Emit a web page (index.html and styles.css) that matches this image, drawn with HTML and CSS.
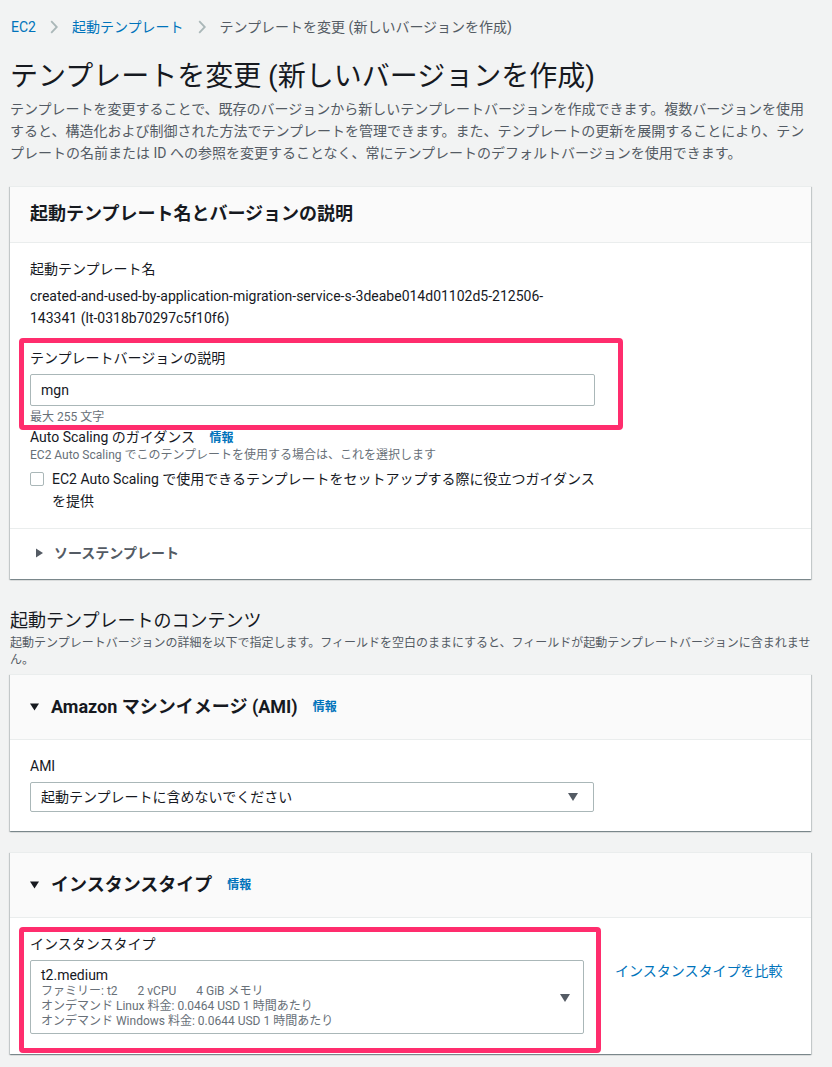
FILE: index.html
```html
<!DOCTYPE html>
<html lang="ja">
<head>
  <meta charset="UTF-8" />
  <meta name="viewport" content="width=device-width, initial-scale=1.0" />
  <title>テンプレートを変更 (新しいバージョンを作成)</title>
  <link rel="stylesheet" href="styles.css">
</head>
<body>
  <div class="page">
    <!-- Breadcrumb -->
    <nav class="crumbs">
      <a href="#">EC2</a>
      <svg class="sep" width="8" height="14" viewBox="0 0 8 14"><path d="M1.2 1.2l5.6 5.8-5.6 5.8" fill="none" stroke="#aab7b8" stroke-width="1.8"/></svg>
      <a href="#">起動テンプレート</a>
      <svg class="sep" width="8" height="14" viewBox="0 0 8 14"><path d="M1.2 1.2l5.6 5.8-5.6 5.8" fill="none" stroke="#aab7b8" stroke-width="1.8"/></svg>
      <span class="current">テンプレートを変更 (新しいバージョンを作成)</span>
    </nav>

    <h1 class="page-title">テンプレートを変更 (新しいバージョンを作成)</h1>
    <p class="page-desc">テンプレートを変更することで、既存のバージョンから新しいテンプレートバージョンを作成できます。複数バージョンを使用<br>すると、構造化および制御された方法でテンプレートを管理できます。また、テンプレートの更新を展開することにより、テン<br>プレートの名前または ID への参照を変更することなく、常にテンプレートのデフォルトバージョンを使用できます。</p>

    <!-- Name and version -->
    <section class="panel panel-first">
      <div class="panel-head"><h2>起動テンプレート名とバージョンの説明</h2></div>
      <div class="panel-body">
        <div class="field">
          <div class="label">起動テンプレート名</div>
          <div class="value">created-and-used-by-application-migration-service-s-3deabe014d01102d5-212506-<br>143341 (lt-0318b70297c5f10f6)</div>
        </div>
        <div class="field field-desc marked">
          <div class="label">テンプレートバージョンの説明</div>
          <div class="input">mgn</div>
          <div class="hint">最大 255 文字</div>
        </div>
        <div class="field field-guide">
          <div class="label">Auto Scaling のガイダンス <a class="info" href="#">情報</a></div>
          <div class="note">EC2 Auto Scaling でこのテンプレートを使用する場合は、これを選択します</div>
          <label class="check">
            <span class="box"></span>
            <span>EC2 Auto Scaling で使用できるテンプレートをセットアップする際に役立つガイダンス<br>を提供</span>
          </label>
        </div>
      </div>
      <div class="panel-foot">
        <svg width="16" height="16" viewBox="0 0 16 16"><polygon points="6,3.5 13,8 6,12.5" fill="#545b64"/></svg>
        ソーステンプレート
      </div>
    </section>

    <!-- Contents -->
    <h2 class="section-title">起動テンプレートのコンテンツ</h2>
    <p class="section-desc">起動テンプレートバージョンの詳細を以下で指定します。フィールドを空白のままにすると、フィールドが起動テンプレートバージョンに含まれませ<br>ん。</p>

    <section class="panel">
      <div class="panel-head tall">
        <h2>
          <svg width="12" height="12" viewBox="0 0 12 12"><polygon points="0,2.5 9,2.5 4.5,9.5" fill="#16191f"/></svg>
          Amazon マシンイメージ (AMI)
          <a class="info" href="#">情報</a>
        </h2>
      </div>
      <div class="panel-body body-ami">
        <div class="field">
          <div class="label">AMI</div>
          <div class="select">
            <span>起動テンプレートに含めないでください</span>
            <svg width="10" height="8" viewBox="0 0 10 8"><polygon points="0,0 10,0 5,8" fill="#545b64"/></svg>
          </div>
        </div>
      </div>
    </section>

    <section class="panel panel-type">
      <div class="panel-head tall">
        <h2>
          <svg width="12" height="12" viewBox="0 0 12 12"><polygon points="0,2.5 9,2.5 4.5,9.5" fill="#16191f"/></svg>
          インスタンスタイプ
          <a class="info" href="#">情報</a>
        </h2>
      </div>
      <div class="panel-body body-type">
        <div class="type-row">
          <div class="field field-type marked">
            <div class="label">インスタンスタイプ</div>
            <div class="select select-tall">
              <div class="opt">
                <div class="opt-name">t2.medium</div>
                <div class="opt-meta">ファミリー: t2<span class="gap"></span>2 vCPU<span class="gap"></span>4 GiB メモリ</div>
                <div class="opt-meta">オンデマンド Linux 料金: 0.0464 USD 1 時間あたり</div>
                <div class="opt-meta">オンデマンド Windows 料金: 0.0644 USD 1 時間あたり</div>
              </div>
              <svg width="10" height="8" viewBox="0 0 10 8"><polygon points="0,0 10,0 5,8" fill="#545b64"/></svg>
            </div>
          </div>
          <a class="compare" href="#">インスタンスタイプを比較</a>
        </div>
      </div>
    </section>
  </div>
</body>
</html>
```

FILE: styles.css
```css
/* Global */
* {
  box-sizing: border-box;
}
body {
  margin: 0;
  background: #f2f3f3;
  color: #16191f;
  font-family: Roboto, "Noto Sans CJK JP", sans-serif;
  font-size: 14px;
  line-height: 20px;
}
a {
  color: #0073bb;
  text-decoration: none;
}
.page {
  padding: 17px 21px 40px 10px;
}

/* Breadcrumb */
.crumbs {
  display: flex;
  align-items: center;
  height: 20px;
  padding-left: 1px;
}
.crumbs .sep {
  margin: 0 14px 0 14px;
}
.crumbs .current {
  color: #545b64;
}

/* Page header */
.page-title {
  margin: 22px 0 3px;
  font-size: 28px;
  line-height: 36px;
  font-weight: 400;
}
.page-desc {
  margin: 0 -21px 0 0;
  color: #545b64;
  line-height: 22px;
}

/* Panels */
.panel {
  background: #fff;
  border-top: 1px solid #eaeded;
  box-shadow: 0 1px 1px 0 rgba(0,28,36,0.3), 1px 1px 1px 0 rgba(0,28,36,0.15), -1px 1px 1px 0 rgba(0,28,36,0.15);
}
.panel-first {
  margin-top: 22px;
}
.panel-head {
  background: #fafafa;
  border-bottom: 1px solid #eaeded;
  padding: 15px 20px 16px;
}
.panel-head.tall {
  padding: 20px 20px 20px;
}
.panel-head h2 {
  display: flex;
  align-items: center;
  margin: 0;
  font-size: 18px;
  line-height: 24px;
  font-weight: 700;
}
.panel-head h2 svg {
  margin-right: 9px;
}
.panel-head .info {
  margin-left: 15px;
  font-size: 12px;
  font-weight: 700;
}
.panel-body {
  padding: 16px 20px 16px;
}
.panel-foot {
  display: flex;
  align-items: center;
  border-top: 1px solid #eaeded;
  padding: 14px 20px 16px;
  font-weight: 700;
  color: #545b64;
}
.panel-foot svg {
  margin-right: 8px;
}

/* Form fields */
.field {
  width: 565px;
}
.label {
  line-height: 20px;
}
.value {
  margin-top: 6px;
  line-height: 22px;
}
.field-desc {
  margin-top: 19px;
}
.input {
  margin-top: 6px;
  height: 32px;
  padding: 0 10px;
  border: 1px solid #aab7b8;
  border-radius: 2px;
  display: flex;
  align-items: center;
}
.hint {
  margin-top: 3px;
  font-size: 12px;
  line-height: 16px;
  color: #687078;
}
.field-guide {
  margin-top: 3px;
}
.field-guide .label {
  line-height: 18px;
}
.field-guide .info {
  margin-left: 11px;
  font-size: 12px;
  font-weight: 700;
}
.note {
  font-size: 12px;
  line-height: 16px;
  color: #687078;
}
.check {
  display: flex;
  align-items: flex-start;
  margin-top: 5px;
  line-height: 22px;
}
.check .box {
  flex: none;
  width: 14px;
  height: 14px;
  margin: 4px 8px 0 0;
  border: 1px solid #aab7b8;
  border-radius: 2px;
}

/* Annotation boxes */
.marked {
  position: relative;
}
.marked::after {
  content: "";
  position: absolute;
  border: 5px solid #ff2d6d;
  border-radius: 4px;
}
.field-desc.marked::after {
  top: -10px;
  left: -11px;
  right: -28px;
  bottom: -5px;
}
.field-type.marked::after {
  top: -7px;
  left: -11px;
  right: -17px;
  bottom: -19px;
}

/* Section */
.section-title {
  margin: 30px 0 2px;
  font-size: 18px;
  line-height: 24px;
  font-weight: 400;
}
.section-desc {
  margin: 0 -21px 5px 0;
  font-size: 12px;
  line-height: 17px;
  color: #545b64;
}

/* Selects */
.select {
  margin-top: 6px;
  height: 30px;
  padding: 0 15px 0 10px;
  border: 1px solid #aab7b8;
  border-radius: 2px;
  display: flex;
  align-items: center;
  justify-content: space-between;
}
.field .select {
  width: 564px;
}
.body-ami {
  padding-bottom: 19px;
}
.panel-type {
  margin-top: 21px;
}
.body-type {
  padding-bottom: 20px;
}
.type-row {
  display: flex;
  align-items: flex-start;
  gap: 31px;
}
.field-type {
  width: 554px;
}
.field-type .select-tall {
  width: 554px;
  height: 74px;
  padding: 5px 13px 4px 10px;
}
.opt-name {
  line-height: 18px;
}
.opt-meta {
  font-size: 12px;
  line-height: 15px;
  color: #687078;
}
.opt-meta .gap {
  display: inline-block;
  width: 20px;
}
.compare {
  margin-top: 27px;
}
```
